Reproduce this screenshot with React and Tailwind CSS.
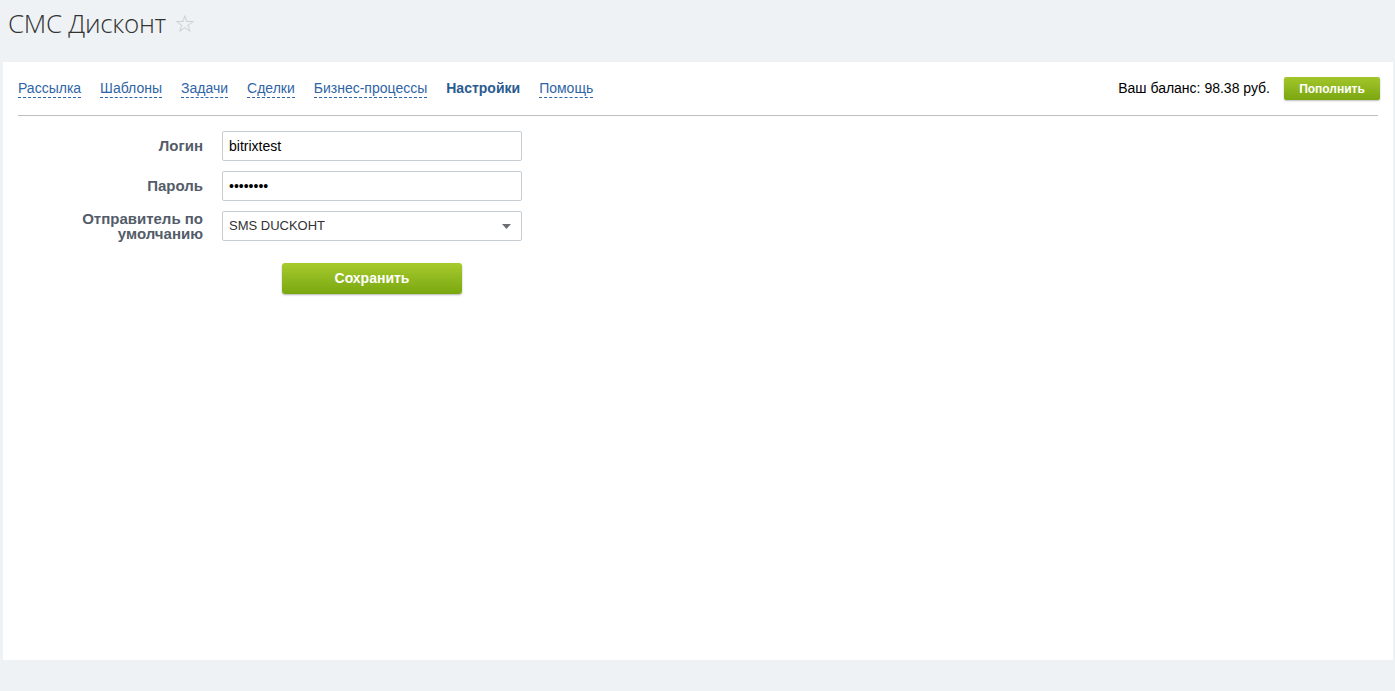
export default function App() {
  const tabs = ['Рассылка', 'Шаблоны', 'Задачи', 'Сделки', 'Бизнес-процессы', 'Настройки', 'Помощь'];

  return (
    <div className="min-h-[691px] bg-[#eef2f4] font-['Liberation_Sans',Arial,sans-serif] flex flex-col">
      <div className="h-[62px] flex items-start pl-[8px] pt-[6px]">
        <h1 className="font-['Open_Sans',sans-serif] font-light text-[26px] leading-[34px] text-[#333] tracking-[-0.3px]">
          СМС Дисконт
        </h1>
        <span className="ml-[8px] mt-[2px] text-[24px] leading-[32px] text-[#c5c9cd]">☆</span>
      </div>

      <div className="ml-[3px] mr-[2px] h-[598px] bg-white px-[15px]">
        <div className="flex items-center justify-between h-[54px] border-b border-[#bfbfbf]">
          <nav className="flex gap-[19px] text-[14px] leading-[18px]">
            {tabs.map((t) =>
              t === 'Настройки' ? (
                <span key={t} className="font-bold text-[#2a5b8f]">{t}</span>
              ) : (
                <a key={t} href="#" className="text-[#2f64a6] border-b border-dashed border-[#2f64a6]">
                  {t}
                </a>
              )
            )}
          </nav>
          <div className="flex items-center mr-[-2px]">
            <span className="text-[14px] text-black">Ваш баланс: 98.38 руб.</span>
            <button className="ml-[14px] w-[96px] h-[23px] rounded-[2px] bg-gradient-to-b from-[#a3c72a] to-[#7aa60f] text-white text-[12px] font-bold shadow-[0_1px_2px_rgba(0,0,0,0.25)]">
              Пополнить
            </button>
          </div>
        </div>

        <div className="pt-[15px] flex flex-col gap-[10px]">
          <div className="flex items-center">
            <label className="w-[185px] text-right text-[15px] font-bold text-[#535c69]">Логин</label>
            <input
              defaultValue="bitrixtest"
              className="ml-[19px] w-[300px] h-[30px] border border-[#c6cdd3] rounded-[2px] px-[6px] text-[14px] text-black outline-none"
            />
          </div>
          <div className="flex items-center">
            <label className="w-[185px] text-right text-[15px] font-bold text-[#535c69]">Пароль</label>
            <input
              type="password"
              defaultValue="password"
              className="ml-[19px] w-[300px] h-[30px] border border-[#c6cdd3] rounded-[2px] px-[6px] text-[14px] text-black outline-none"
            />
          </div>
          <div className="flex items-center">
            <label className="w-[185px] text-right text-[15px] leading-[15px] font-bold text-[#535c69]">
              Отправитель по
              <br />
              умолчанию
            </label>
            <div className="ml-[19px] w-[300px] h-[30px] border border-[#c6cdd3] rounded-[2px] px-[6px] flex items-center justify-between">
              <span className="text-[13px] text-[#333]">SMS DUCKOHT</span>
              <svg width="9" height="5" viewBox="0 0 9 5" className="mr-[4px]">
                <path d="M0 0h9L4.5 5z" fill="#6b6f74" />
              </svg>
            </div>
          </div>
          <div className="pl-[264px] pt-[12px]">
            <button className="w-[180px] h-[31px] rounded-[3px] bg-gradient-to-b from-[#a6cb2c] to-[#7aa70f] text-white text-[14px] font-bold shadow-[0_1px_2px_rgba(0,0,0,0.3)]">
              Сохранить
            </button>
          </div>
        </div>
      </div>
    </div>
  );
}
